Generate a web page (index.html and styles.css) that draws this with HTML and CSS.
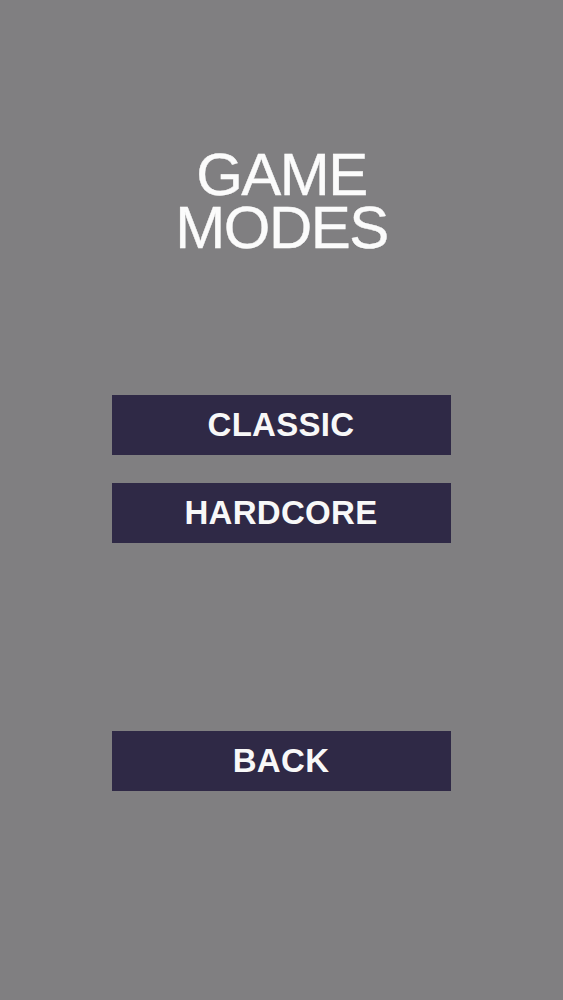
FILE: index.html
```html
<!DOCTYPE html>
<html>
<head>
<meta charset="utf-8">
<link rel="stylesheet" href="styles.css">
</head>
<body>
<main class="screen">
  <h1 class="title">GAME<br>MODES</h1>
  <div class="modes">
    <button class="btn">CLASSIC</button>
    <button class="btn">HARDCORE</button>
  </div>
  <button class="btn back">BACK</button>
</main>
</body>
</html>
```
FILE: styles.css
```css
html, body {
  margin: 0;
  padding: 0;
  background: #807f81;
}
.screen {
  width: 563px;
  height: 1000px;
  display: flex;
  flex-direction: column;
  align-items: center;
  font-family: "Liberation Sans", Arial, sans-serif;
}
.title {
  margin: 148px 0 0 0;
  font-size: 60px;
  font-weight: normal;
  line-height: 53px;
  letter-spacing: -1.5px;
  color: #fbfbfb;
  -webkit-text-stroke: 0.4px #fbfbfb;
  text-align: center;
}
.modes {
  margin-top: 141px;
  display: flex;
  flex-direction: column;
  gap: 28px;
}
.btn {
  width: 339px;
  height: 60px;
  margin: 0 1px 0 0;
  padding: 0;
  border: none;
  background: #2f2946;
  color: #f8f8f8;
  font-family: "Liberation Sans", Arial, sans-serif;
  font-size: 33px;
  font-weight: bold;
  letter-spacing: 0.3px;
  display: flex;
  align-items: center;
  justify-content: center;
}
.back {
  margin-top: 188px;
}
```
